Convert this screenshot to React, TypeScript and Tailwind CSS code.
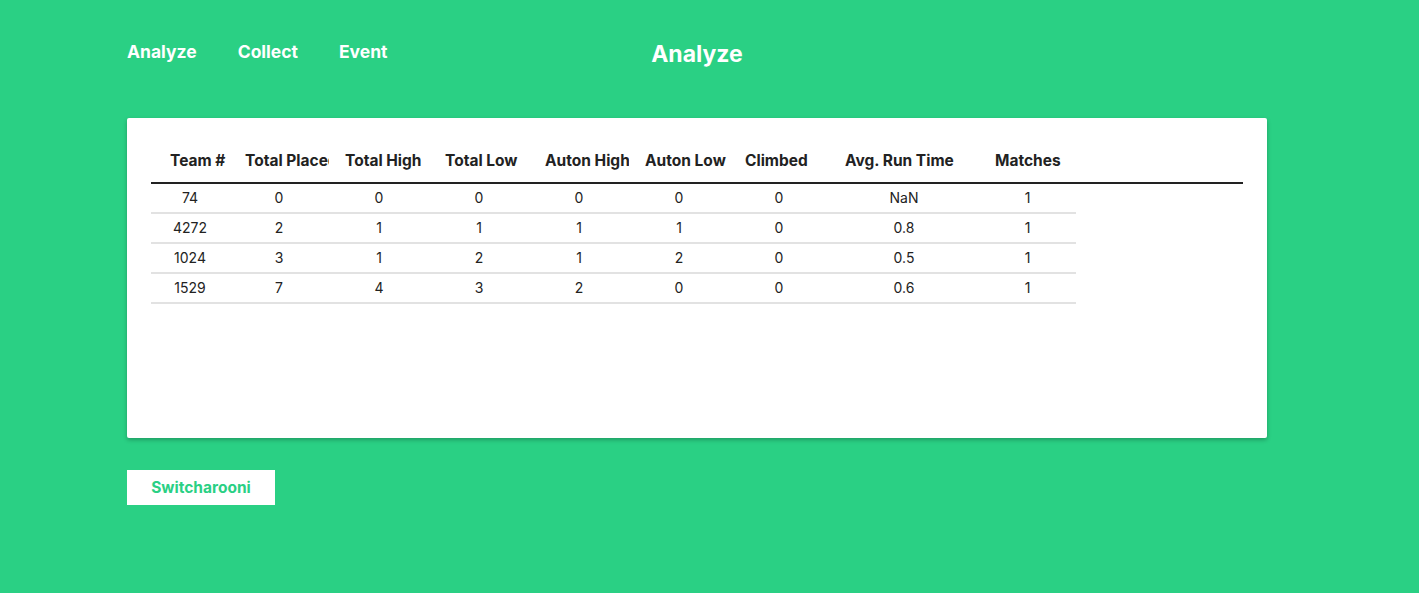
import React from "react";

interface Row {
  team: string;
  place: number;
  high: number;
  low: number;
  autoHigh: number;
  autoLow: number;
  climbed: number;
  runTime: string;
  matches: number;
}

const rows: Row[] = [
  { team: "74", place: 0, high: 0, low: 0, autoHigh: 0, autoLow: 0, climbed: 0, runTime: "NaN", matches: 1 },
  { team: "4272", place: 2, high: 1, low: 1, autoHigh: 1, autoLow: 1, climbed: 0, runTime: "0.8", matches: 1 },
  { team: "1024", place: 3, high: 1, low: 2, autoHigh: 1, autoLow: 2, climbed: 0, runTime: "0.5", matches: 1 },
  { team: "1529", place: 7, high: 4, low: 3, autoHigh: 2, autoLow: 0, climbed: 0, runTime: "0.6", matches: 1 },
];

// column widths in px, headers get clipped like the original
const columns = [
  { label: "Team #", width: "w-[78px]", pad: "pl-[19px]" },
  { label: "Total Placed", width: "w-[100px]", pad: "pl-[16px]" },
  { label: "Total High", width: "w-[100px]", pad: "pl-[16px]" },
  { label: "Total Low", width: "w-[100px]", pad: "pl-[16px]" },
  { label: "Auton High", width: "w-[100px]", pad: "pl-[16px]" },
  { label: "Auton Low", width: "w-[100px]", pad: "pl-[16px]" },
  { label: "Climbed", width: "w-[100px]", pad: "pl-[16px]" },
  { label: "Avg. Run Time", width: "w-[150px]", pad: "pl-[16px]" },
  { label: "Matches", width: "w-[97px]", pad: "pl-[16px]" },
];

function App() {
  return (
    <div
      className="min-h-[593px] bg-[#2ad084] pl-[127px] pt-[40px] pb-10"
      style={{ fontFamily: "Inter, 'Liberation Sans', sans-serif" }}
    >
      <div className="w-[1140px]">
        {/* header */}
        <div className="relative flex items-center h-[24px]">
          <nav className="flex gap-[41px] text-[17.5px] font-bold text-white">
            <span>Analyze</span>
            <span>Collect</span>
            <span>Event</span>
          </nav>
          <h1 className="absolute left-0 right-0 -top-[3px] text-center text-[23px] font-bold text-white pointer-events-none">
            Analyze
          </h1>
        </div>

        {/* table card */}
        <div className="mt-[54px] h-[320px] bg-white rounded-[2px] shadow-[0_2px_4px_rgba(0,0,0,0.25)] px-[24px] pt-[26px]">
          <div className="text-[#222]">
            <div className="flex border-b-2 border-[#222] h-[40px] items-center pb-[5px]">
              {columns.map((c) => (
                <div
                  key={c.label}
                  className={`${c.width} ${c.pad} pr-[4px] shrink-0 overflow-hidden whitespace-nowrap text-[15.5px] font-bold`}
                >
                  {c.label}
                </div>
              ))}
            </div>
            {rows.map((r) => (
              <div
                key={r.team}
                className="flex w-[925px] h-[30px] items-center border-b-2 border-[#e2e2e2] text-[14px] pb-[1px]"
              >
                {[
                  r.team,
                  r.place,
                  r.high,
                  r.low,
                  r.autoHigh,
                  r.autoLow,
                  r.climbed,
                  r.runTime,
                  r.matches,
                ].map((v, i) => (
                  <div key={i} className={`${columns[i].width} shrink-0 text-center`}>
                    {v}
                  </div>
                ))}
              </div>
            ))}
          </div>
        </div>

        <button className="mt-[32px] w-[148px] h-[35px] bg-white text-[#2ad084] text-[15.5px] font-bold">
          Switcharooni
        </button>
      </div>
    </div>
  );
}

export default App;
